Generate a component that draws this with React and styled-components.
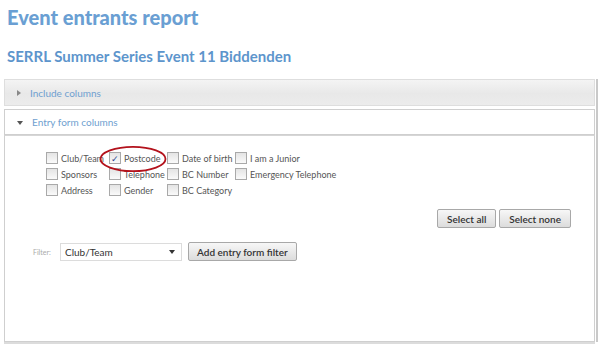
import React from 'react'
import styled, { createGlobalStyle } from 'styled-components'

const Global = createGlobalStyle`
  body {
    margin: 0;
    background: #ffffff;
    font-family: Lato, "Open Sans", sans-serif;
  }
`

const Page = styled.div`
  width: 600px;
  height: 346px;
  overflow: hidden;
  position: relative;
`

const Title = styled.h1`
  margin: 0;
  padding: 4px 0 0 7px;
  font-size: 20px;
  font-weight: 900;
  color: #6a9fd3;
  line-height: 26px;
`

const SubTitle = styled.h2`
  margin: 0;
  padding: 16px 0 0 7px;
  font-size: 15px;
  font-weight: bold;
  color: #5d95cc;
  line-height: 20px;
`

const Accordion = styled.div`
  margin: 13px 2px 0 4px;
  border-right: 2px solid #c9c9c9;
  display: flex;
  flex-direction: column;
  gap: 3px;
  padding-right: 1px;
`

const Header = styled.div`
  height: ${p => (p.open ? 24 : 25)}px;
  display: flex;
  align-items: center;
  gap: 9px;
  padding-left: 12px;
  border: 1px solid ${p => (p.open ? '#cfcfcf' : '#dedede')};
  background: ${p => (p.open ? '#ffffff' : 'linear-gradient(#f4f4f4, #e8e8e8 55%, #ececec)')};
  font-size: 10px;
  color: #6f9fd0;
`

const Arrow = styled.span`
  width: 0;
  height: 0;
  border: 3px solid transparent;
  ${p => (p.open
    ? 'border-top: 4px solid #555; border-bottom: none; margin-top: 2px;'
    : 'border-left: 4px solid #888; border-right: none;')}
`

const Content = styled.div`
  margin-top: -3px;
  border: 1px solid #cfcfcf;
  border-top: 1px solid #d6d6d6;
  box-shadow: 0 2px 0 #dcdcdc;
  padding: 14px 23px 0 41px;
  box-sizing: border-box;
  height: 207px;
  position: relative;
`

const Grid = styled.div`
  display: grid;
  grid-template-columns: 63px 58px 68px auto;
  grid-auto-rows: 16px;
`

const Item = styled.label`
  display: flex;
  align-items: center;
  gap: 3px;
  font-size: 9px;
  color: #555;
  white-space: nowrap;
`

const Box = styled.span`
  width: 10px;
  height: 10px;
  border: 1px solid #a9a9a9;
  background: linear-gradient(#e4e4e4, #fafafa);
  display: flex;
  align-items: center;
  justify-content: center;
  font-size: 9px;
  line-height: 1;
  color: #2a3f8a;
`

const Actions = styled.div`
  display: flex;
  justify-content: flex-end;
  gap: 3px;
  margin-top: 11px;
`

const Button = styled.button`
  height: 19px;
  padding: 0 ${p => p.pad || 8}px;
  border: 1px solid #a8a8a8;
  border-radius: 2px;
  background: linear-gradient(#f7f7f7, #dcdcdc);
  font-family: Lato, "Open Sans", sans-serif;
  font-size: 10px;
  font-weight: 600;
  color: #333;
`

const FilterRow = styled.div`
  display: flex;
  align-items: center;
  margin: 14px 0 0 -13px;
`

const FilterLabel = styled.span`
  font-size: 7px;
  color: #aaa;
  width: 27px;
`

const Select = styled.div`
  width: 122px;
  height: 18px;
  box-sizing: border-box;
  border: 1px solid #dcdcdc;
  display: flex;
  align-items: center;
  justify-content: space-between;
  padding: 0 6px 0 4px;
  font-size: 10px;
  color: #333;
  margin-right: 6px;
`

const Caret = styled.span`
  width: 0;
  height: 0;
  border-left: 3px solid transparent;
  border-right: 3px solid transparent;
  border-top: 4px solid #333;
`

const Ring = styled.svg`
  position: absolute;
  left: 93px;
  top: 9px;
`

const items = [
  ['Club/Team'], ['Postcode', true], ['Date of birth'], ['I am a Junior'],
  ['Sponsors'], ['Telephone'], ['BC Number'], ['Emergency Telephone'],
  ['Address'], ['Gender'], ['BC Category'],
]

export default function App() {
  return (
    <Page>
      <Global />
      <Title>Event entrants report</Title>
      <SubTitle>SERRL Summer Series Event 11 Biddenden</SubTitle>
      <Accordion>
        <Header><Arrow />Include columns</Header>
        <Header open><Arrow open />Entry form columns</Header>
        <Content>
          <Grid>
            {items.map(([label, checked]) => (
              <Item key={label}>
                <Box>{checked ? '✓' : ''}</Box>
                {label}
              </Item>
            ))}
          </Grid>
          <Ring width="70" height="28" viewBox="0 0 70 28">
            <ellipse cx="35" cy="14" rx="32.5" ry="12.2" fill="none" stroke="#b3121c" strokeWidth="1.8" />
          </Ring>
          <Actions>
            <Button pad={9}>Select all</Button>
            <Button pad={9}>Select none</Button>
          </Actions>
          <FilterRow>
            <FilterLabel>Filter:</FilterLabel>
            <Select>Club/Team<Caret /></Select>
            <Button>Add entry form filter</Button>
          </FilterRow>
        </Content>
      </Accordion>
    </Page>
  )
}
